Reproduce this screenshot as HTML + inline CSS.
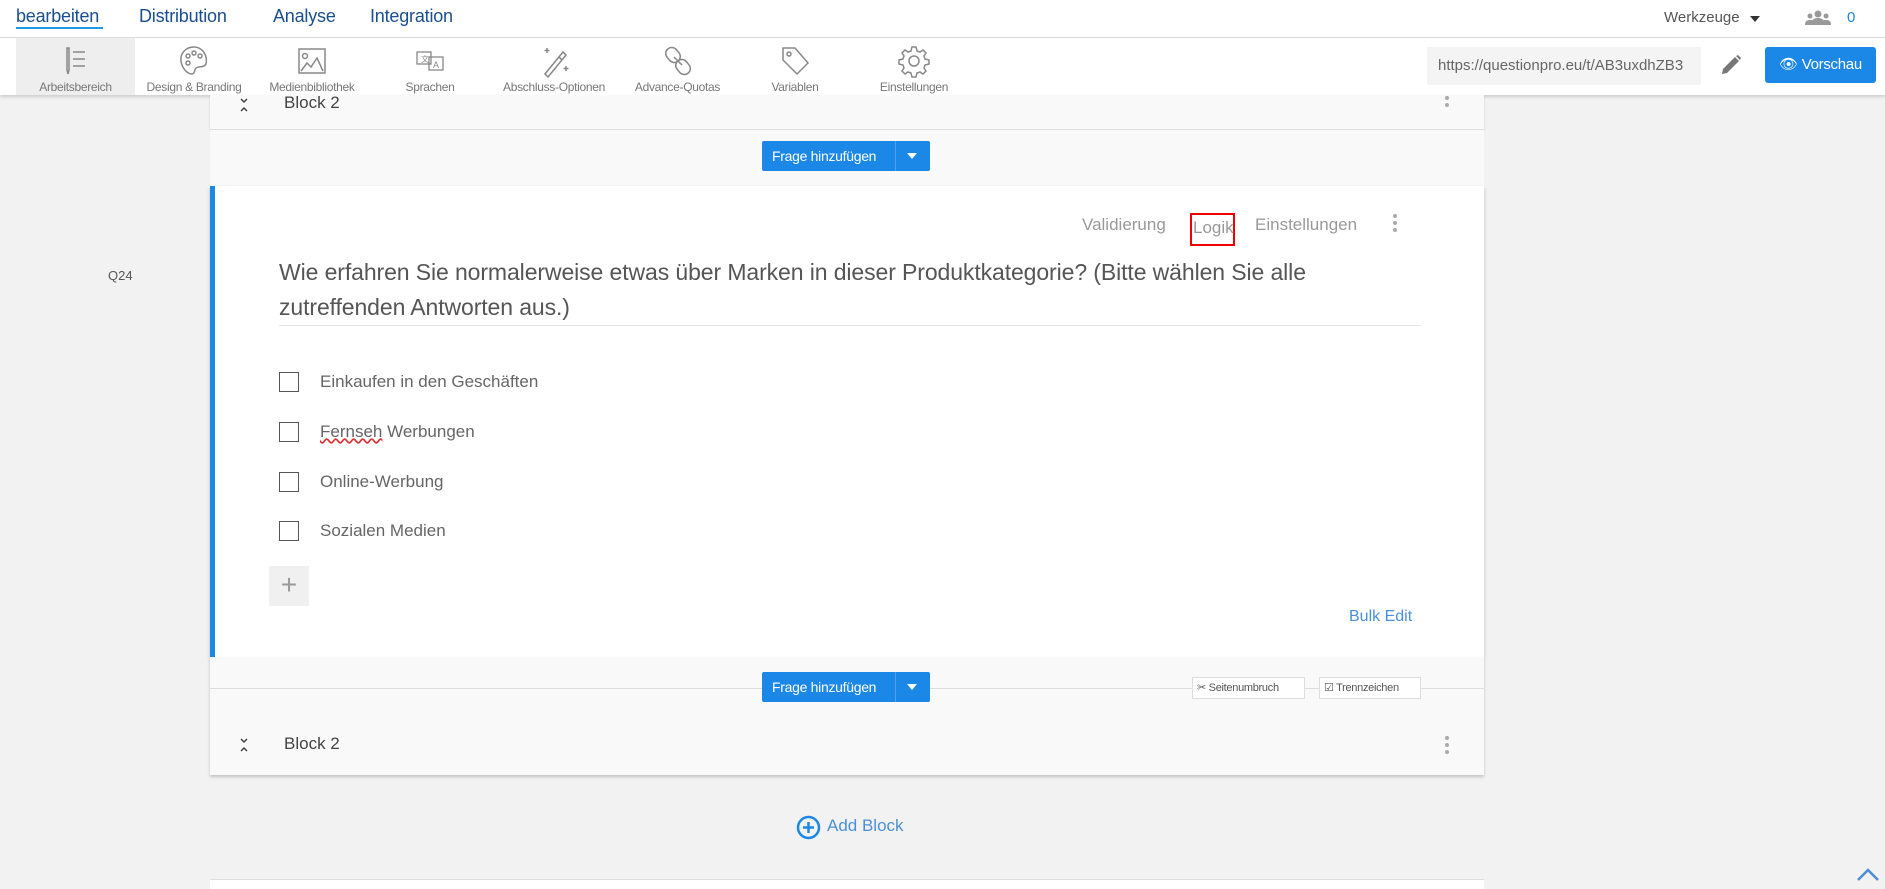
<!DOCTYPE html>
<html><head><meta charset="utf-8"><style>
*{box-sizing:border-box;margin:0;padding:0}
body{width:1885px;height:885px;overflow:hidden;background:#f2f2f2;font-family:"Liberation Sans",sans-serif;position:relative;color:#555}
.a{position:absolute;white-space:nowrap}
.tab{position:absolute;top:6px;font-size:18px;color:#1a4f8f;letter-spacing:-0.2px}
.ti{position:absolute;top:38px;height:57px;text-align:center;font-size:12px;color:#777;letter-spacing:-0.3px}
.ti svg{display:block;margin:6px auto 2px}
.btn{position:absolute;background:#1b87e6;color:#fff;font-size:14px;border-radius:2px;height:30px;line-height:30px;letter-spacing:-0.3px}
.cb{position:absolute;left:279px;width:20px;height:20px;border:1.5px solid #555}
.opt{position:absolute;left:320px;font-size:17px;color:#666}
.sm{position:absolute;height:22px;border:1px solid #ddd;background:#fff;font-size:11px;line-height:20px;padding:0 4px;color:#555;letter-spacing:-0.3px}
</style></head><body>
<div class="a" style="left:0;top:0;width:1885px;height:38px;background:#fff;border-bottom:1px solid #ddd"></div>
<div class="tab" style="left:16px">bearbeiten</div>
<div class="a" style="left:16px;top:27px;width:87px;height:2px;background:#1b9ae6"></div>
<div class="tab" style="left:139px">Distribution</div>
<div class="tab" style="left:273px">Analyse</div>
<div class="tab" style="left:370px">Integration</div>
<div class="a" style="left:1664px;top:9px;font-size:15px;color:#555">Werkzeuge</div>
<div class="a" style="left:1750px;top:16px;border:5px solid transparent;border-top:6px solid #333"></div>
<svg class="a" style="left:1805px;top:10px" width="26" height="16" viewBox="0 0 26 16" fill="#999"><circle cx="13" cy="4" r="3.5"/><path d="M6 15c0-5 3-7 7-7s7 2 7 7z"/><circle cx="5" cy="6" r="2.5"/><path d="M0 15c0-4 2-5 5-5s5 1 5 5z"/><circle cx="21" cy="6" r="2.5"/><path d="M16 15c0-4 2-5 5-5s5 1 5 5z"/></svg>
<div class="a" style="left:1847px;top:9px;font-size:15px;color:#1b87e6">0</div>
<div class="a" style="left:0;top:38px;width:1885px;height:57px;background:#fff;box-shadow:0 2px 3px rgba(0,0,0,.15)"></div>
<div class="a" style="left:16px;top:38px;width:119px;height:57px;background:#eee"></div>
<div class="ti" style="left:16px;width:119px"><svg width="30" height="34" viewBox="0 0 30 34" fill="none" stroke="#888" stroke-width="1.5"><path d="M6 4v22l1 4 1-4V4z"/><path d="M12 8h12M12 15h12M12 22h12"/></svg>Arbeitsbereich</div>
<div class="ti" style="left:139px;width:110px"><svg width="34" height="34" viewBox="0 0 34 34" fill="none" stroke="#888" stroke-width="1.5"><path d="M17 3C9 3 3 9 4 17c1 7 6 13 11 13 3 0 2-4 4-6s8 0 10-4c2-9-4-17-12-17z"/><circle cx="11" cy="12" r="2"/><circle cx="17" cy="9" r="2"/><circle cx="23" cy="12" r="2"/><circle cx="11" cy="19" r="2"/></svg>Design &amp; Branding</div>
<div class="ti" style="left:257px;width:110px"><svg width="34" height="34" viewBox="0 0 34 34" fill="none" stroke="#888" stroke-width="1.5"><rect x="4" y="5" width="26" height="24"/><circle cx="10" cy="12" r="2.5"/><path d="M6 27l6-8 4 4 6-9 6 13"/></svg>Medienbibliothek</div>
<div class="ti" style="left:380px;width:100px"><svg width="34" height="34" viewBox="0 0 34 34" fill="none" stroke="#888" stroke-width="1.3"><rect x="4" y="8" width="14" height="12"/><rect x="16" y="13" width="14" height="13"/><text x="8" y="18" font-size="8" fill="#888" stroke="none">文</text><text x="20" y="24" font-size="9" fill="#888" stroke="none">A</text></svg>Sprachen</div>
<div class="ti" style="left:490px;width:128px"><svg width="34" height="34" viewBox="0 0 34 34" fill="none" stroke="#888" stroke-width="1.5"><path d="M8 30L26 8l3 3-18 22z"/><path d="M22 13l3 3"/><path d="M10 4v5M7.5 6.5h5M29 22v5M26.5 24.5h5"/></svg>Abschluss-Optionen</div>
<div class="ti" style="left:625px;width:105px"><svg width="34" height="34" viewBox="0 0 34 34" fill="none" stroke="#888" stroke-width="1.5"><rect x="6" y="3" width="12" height="16" rx="6" transform="rotate(-40 12 11)"/><rect x="16" y="15" width="12" height="16" rx="6" transform="rotate(-40 22 23)"/><path d="M13 13l8 8"/></svg>Advance-Quotas</div>
<div class="ti" style="left:745px;width:100px"><svg width="34" height="34" viewBox="0 0 34 34" fill="none" stroke="#888" stroke-width="1.5"><path d="M5 4h12l13 15-11 11L5 16z"/><circle cx="11" cy="10" r="2"/></svg>Variablen</div>
<div class="ti" style="left:864px;width:100px"><svg width="34" height="34" viewBox="0 0 34 34" fill="none" stroke="#888" stroke-width="1.5"><circle cx="17" cy="17" r="5"/><path d="M15 3h4l1 4 3 1 3-2 3 3-2 3 1 3 4 1v4l-4 1-1 3 2 3-3 3-3-2-3 1-1 4h-4l-1-4-3-1-3 2-3-3 2-3-1-3-4-1v-4l4-1 1-3-2-3 3-3 3 2 3-1z"/></svg>Einstellungen</div>
<div class="a" style="left:1427px;top:47px;width:274px;height:38px;background:#f4f4f4;font-size:15px;line-height:38px;padding-left:11px;color:#666;overflow:hidden">https://questionpro.eu/t/AB3uxdhZB3</div>
<svg class="a" style="left:1720px;top:54px" width="22" height="22" viewBox="0 0 22 22" fill="#777"><path d="M2 20l1-5L15 3l4 4L7 19z"/><path d="M16 2l2-1 3 3-1 2z"/></svg>
<div class="btn" style="left:1765px;top:47px;width:111px;height:36px;line-height:36px;font-size:15px;text-align:center;border-radius:3px">&#128065; Vorschau</div>
<div class="a" style="left:210px;top:95px;width:1274px;height:35px;background:#f9f9f9;border-bottom:1px solid #ddd;box-shadow:0 1px 2px rgba(0,0,0,.15)"></div>
<svg class="a" style="left:239px;top:97px" width="10" height="16" viewBox="0 0 10 16" fill="none" stroke="#444" stroke-width="1.5"><path d="M2 2l3 3 3-3M2 14l3-3 3 3"/></svg>
<div class="a" style="left:284px;top:93px;font-size:17px;color:#444">Block 2</div>
<div class="a" style="left:1445px;top:96px;width:4px;height:4px;border-radius:2px;background:#aaa;box-shadow:0 7px #aaa"></div>
<div class="a" style="left:210px;top:130px;width:1274px;height:56px;background:#f9f9f9"></div>
<div class="btn" style="left:762px;top:141px;width:168px"><span style="padding-left:10px">Frage hinzufügen</span><span style="position:absolute;left:133px;top:0;width:1px;height:30px;background:#4ba3ee"></span><span style="position:absolute;left:145px;top:12px;border:5px solid transparent;border-top:6px solid #fff"></span></div>
<div class="a" style="left:210px;top:186px;width:1274px;height:471px;background:#fff;border-left:5px solid #1b87e6;box-shadow:0 2px 4px rgba(0,0,0,.2)"></div>
<div class="a" style="left:108px;top:268px;font-size:13px;color:#555">Q24</div>
<div class="a" style="left:1082px;top:215px;font-size:17px;color:#999">Validierung</div>
<div class="a" style="left:1190px;top:213px;width:45px;height:33px;border:2px solid #e00"></div>
<div class="a" style="left:1193px;top:218px;font-size:17px;color:#999">Logik</div>
<div class="a" style="left:1255px;top:215px;font-size:17px;color:#999">Einstellungen</div>
<div class="a" style="left:1393px;top:214px;width:4px;height:4px;border-radius:2px;background:#aaa;box-shadow:0 7px #aaa,0 14px #aaa"></div>
<div class="a" style="left:279px;top:255px;font-size:23px;color:#555;line-height:35px;letter-spacing:-0.1px">Wie erfahren Sie normalerweise etwas über Marken in dieser Produktkategorie? (Bitte wählen Sie alle<br>zutreffenden Antworten aus.)</div>
<div class="a" style="left:279px;top:325px;width:1142px;height:1px;background:#e6e6e6"></div>
<div class="cb" style="top:372px"></div><div class="opt" style="top:372px">Einkaufen in den Geschäften</div>
<div class="cb" style="top:422px"></div><div class="opt" style="top:422px"><span style="text-decoration:underline wavy #d33">Fernseh</span> Werbungen</div>
<div class="cb" style="top:472px"></div><div class="opt" style="top:472px">Online-Werbung</div>
<div class="cb" style="top:521px"></div><div class="opt" style="top:521px">Sozialen Medien</div>
<div class="a" style="left:269px;top:566px;width:40px;height:40px;background:#f0f0f0;text-align:center;font-size:28px;line-height:38px;color:#999">+</div>
<div class="a" style="left:1349px;top:608px;font-size:16px;color:#4a90d9">Bulk Edit</div>
<div class="a" style="left:210px;top:657px;width:1274px;height:118px;background:#f9f9f9;box-shadow:0 2px 3px rgba(0,0,0,.2)"></div>
<div class="a" style="left:210px;top:688px;width:1274px;height:1px;background:#ddd"></div>
<div class="btn" style="left:762px;top:672px;width:168px"><span style="padding-left:10px">Frage hinzufügen</span><span style="position:absolute;left:133px;top:0;width:1px;height:30px;background:#4ba3ee"></span><span style="position:absolute;left:145px;top:12px;border:5px solid transparent;border-top:6px solid #fff"></span></div>
<div class="sm" style="left:1192px;top:677px;width:113px">&#9986; Seitenumbruch</div>
<div class="sm" style="left:1319px;top:677px;width:102px">&#9745; Trennzeichen</div>
<svg class="a" style="left:239px;top:737px" width="10" height="16" viewBox="0 0 10 16" fill="none" stroke="#444" stroke-width="1.5"><path d="M2 2l3 3 3-3M2 14l3-3 3 3"/></svg>
<div class="a" style="left:284px;top:734px;font-size:17px;color:#444">Block 2</div>
<div class="a" style="left:1445px;top:736px;width:4px;height:4px;border-radius:2px;background:#aaa;box-shadow:0 7px #aaa,0 14px #aaa"></div>
<svg class="a" style="left:796px;top:815px" width="25" height="25" viewBox="0 0 25 25" fill="none" stroke="#1b87e6" stroke-width="2.5"><circle cx="12.5" cy="12.5" r="10.5"/><path d="M12.5 7v11M7 12.5h11"/></svg>
<div class="a" style="left:827px;top:816px;font-size:17px;color:#4a90d9">Add Block</div>
<div class="a" style="left:210px;top:879px;width:1274px;height:10px;background:#fff;border-top:1px solid #ddd"></div>
<svg class="a" style="left:1856px;top:866px" width="24" height="16" viewBox="0 0 24 16" fill="none" stroke="#4a90d9" stroke-width="2.5"><path d="M2 14L12 4l10 10"/></svg>
</body></html>
